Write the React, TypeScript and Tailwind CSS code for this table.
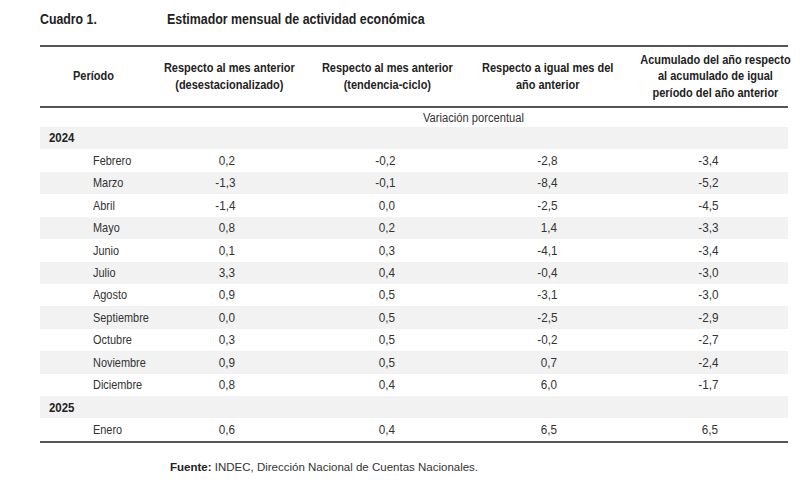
import React from "react";

const rows2024: [string, string, string, string, string][] = [
  ["Febrero", "0,2", "-0,2", "-2,8", "-3,4"],
  ["Marzo", "-1,3", "-0,1", "-8,4", "-5,2"],
  ["Abril", "-1,4", "0,0", "-2,5", "-4,5"],
  ["Mayo", "0,8", "0,2", "1,4", "-3,3"],
  ["Junio", "0,1", "0,3", "-4,1", "-3,4"],
  ["Julio", "3,3", "0,4", "-0,4", "-3,0"],
  ["Agosto", "0,9", "0,5", "-3,1", "-3,0"],
  ["Septiembre", "0,0", "0,5", "-2,5", "-2,9"],
  ["Octubre", "0,3", "0,5", "-0,2", "-2,7"],
  ["Noviembre", "0,9", "0,5", "0,7", "-2,4"],
  ["Diciembre", "0,8", "0,4", "6,0", "-1,7"],
];

const cols = "grid grid-cols-[110px_158px_158px_164px_158px]";

function L({ children }: { children: React.ReactNode }) {
  return <span className="inline-block whitespace-nowrap scale-x-[0.84] origin-left">{children}</span>;
}
function R({ children }: { children: React.ReactNode }) {
  return <span className="inline-block whitespace-nowrap scale-x-[0.9] origin-right">{children}</span>;
}

function DataRow({ r, gray }: { r: [string, string, string, string, string]; gray: boolean }) {
  return (
    <div className={`${cols} h-[22.43px] items-center ${gray ? "bg-[#f2f2f2]" : "bg-white"}`}>
      <div className="pl-[53px]"><L>{r[0]}</L></div>
      <div className="text-right pr-[73px]"><R>{r[1]}</R></div>
      <div className="text-right pr-[71px]"><R>{r[2]}</R></div>
      <div className="text-right pr-[73px]"><R>{r[3]}</R></div>
      <div className="text-right pr-[70px]"><R>{r[4]}</R></div>
    </div>
  );
}

function H({ children }: { children: React.ReactNode }) {
  return (
    <div className="text-center">
      <span className="inline-block whitespace-nowrap scale-x-[0.88]">{children}</span>
    </div>
  );
}

function YearRow({ y }: { y: string }) {
  return (
    <div className="h-[22.43px] flex items-center bg-[#f2f2f2] pl-[9px] font-bold text-[#222]">
      <span className="inline-block scale-x-[0.88] origin-left">{y}</span>
    </div>
  );
}

export default function App() {
  return (
    <div
      className="w-[800px] h-[499px] bg-white text-[#333] overflow-hidden"
      style={{ fontFamily: '"Liberation Sans", Arial, sans-serif' }}
    >
      <div className="pl-[40px] pt-[9px] flex font-bold text-[14px] text-[#222] h-[45px]">
        <div className="w-[127px]"><span className="inline-block scale-x-[0.88] origin-left">Cuadro 1.</span></div>
        <div><span className="inline-block scale-x-[0.885] origin-left whitespace-nowrap">Estimador mensual de actividad económica</span></div>
      </div>
      <div className="ml-[40px] w-[748px] text-[13px]">
        <div className="border-t-[2px] border-[#555]" />
        <div className={`${cols} h-[59px] items-center font-bold text-[12.5px] leading-[16.5px] text-[#222]`}>
          <H><span className="pr-[4px]">Período</span></H>
          <H>Respecto al mes anterior<br />(desestacionalizado)</H>
          <H>Respecto al mes anterior<br />(tendencia-ciclo)</H>
          <H>Respecto a igual mes del<br />año anterior</H>
          <H>Acumulado del año respecto<br />al acumulado de igual<br />período del año anterior</H>
        </div>
        <div className="border-t-[2px] border-[#555]" />
        <div className="h-[19px] flex items-center pl-[383px] text-[12px]">
          <span className="inline-block scale-x-[0.93] origin-left">Variación porcentual</span>
        </div>
        <YearRow y="2024" />
        {rows2024.map((r, i) => (
          <DataRow key={r[0]} r={r} gray={i % 2 === 1} />
        ))}
        <YearRow y="2025" />
        <DataRow r={["Enero", "0,6", "0,4", "6,5", "6,5"]} gray={false} />
        <div className="border-t-[2px] border-[#555]" />
      </div>
      <div className="pl-[170px] pt-[16px] text-[11.5px]">
        <span className="font-bold text-[#222]">Fuente:</span> INDEC, Dirección Nacional de Cuentas Nacionales.
      </div>
    </div>
  );
}
